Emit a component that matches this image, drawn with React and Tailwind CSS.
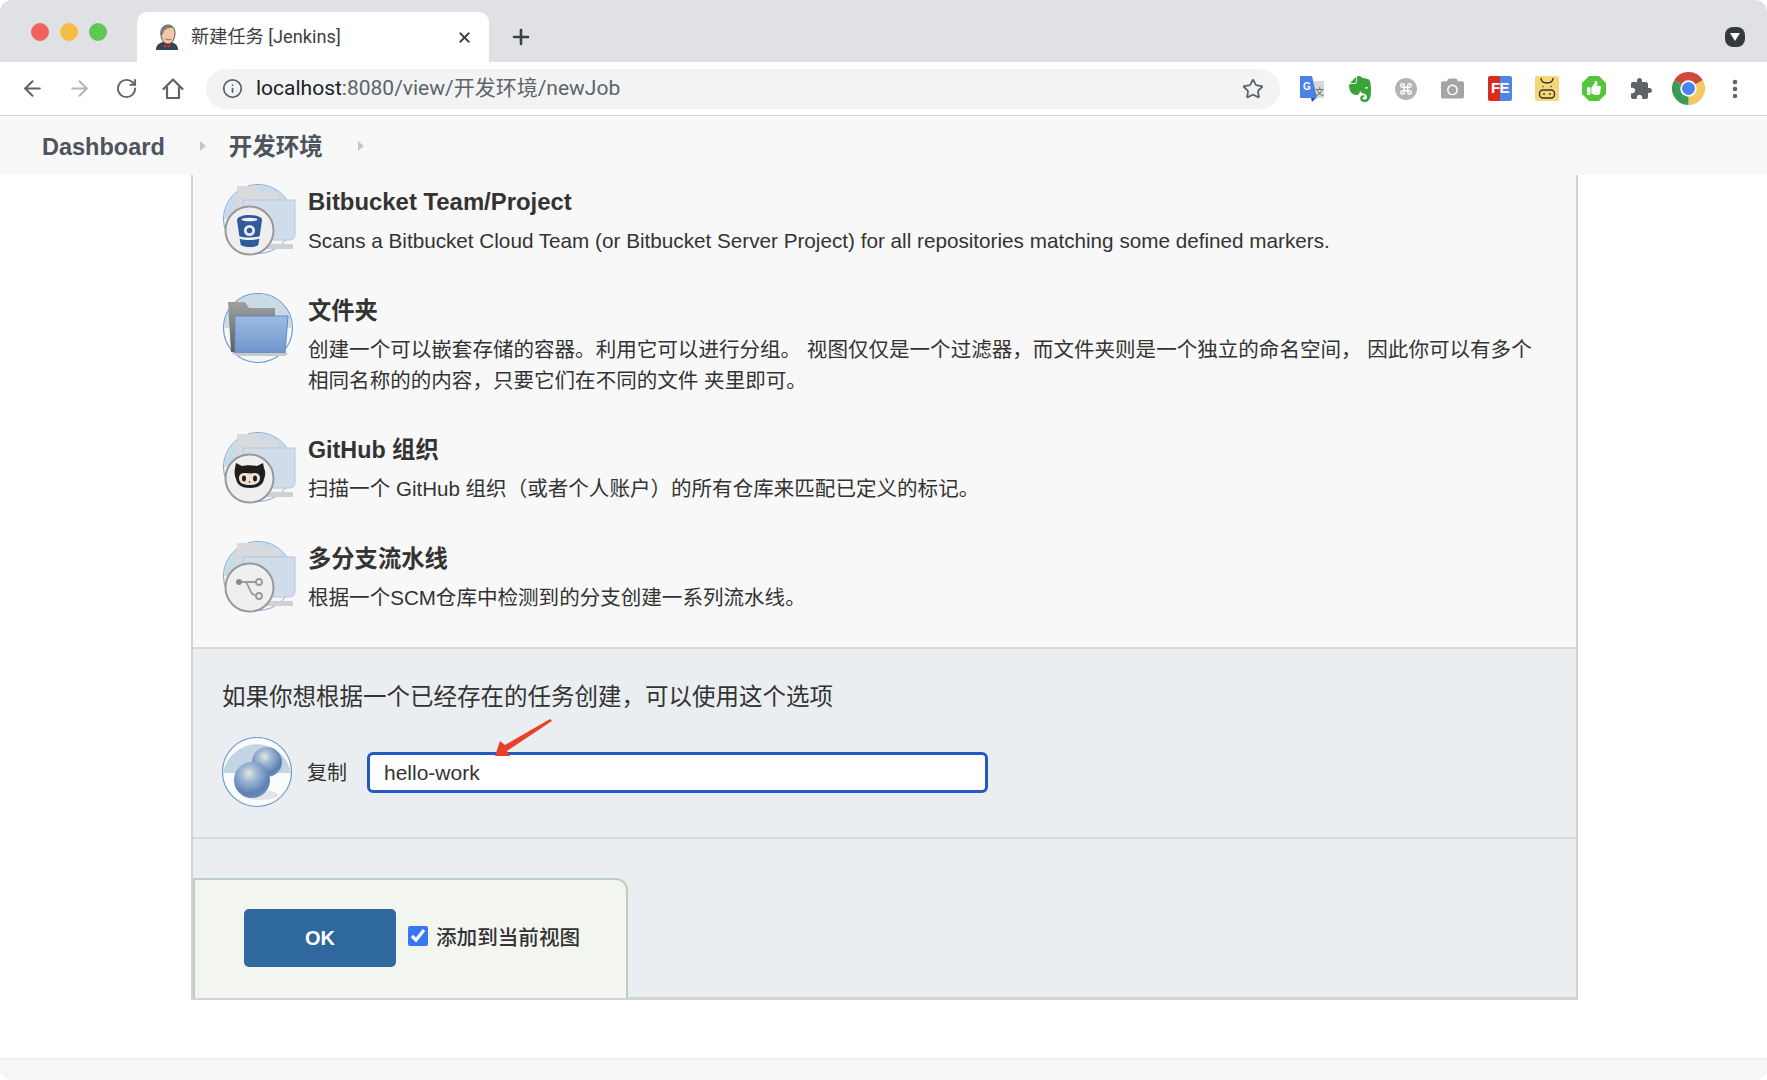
import React from 'react';
import { ArrowLeft, ArrowRight, RotateCw, Info, Star, Plus, X, Command, EllipsisVertical } from 'lucide-react';
import { FaCamera, FaThumbsUp } from 'react-icons/fa';
import { SiEvernote } from 'react-icons/si';

const font = "font-['Liberation_Sans','Noto_Sans_CJK_SC',sans-serif]";

function JenkinsFace() {
  return (
    <svg width="24" height="26" viewBox="0 0 24 26">
      <path d="M1 26c0-5 3-7 7-8h8c4 1 7 3 7 8z" fill="#2f4656" />
      <path d="M6 10c0-6 3-9 7-9s7 3 7 8c0 6-3 11-7 11s-7-4-7-10z" fill="#f0c8a8" stroke="#333" strokeWidth="0.8" />
      <path d="M6 12C4 6 7 1 13 1c3 0 5 1 6 3-4-1-8 0-10 3-1 2-1 4-3 5z" fill="#7a7a7a" />
      <path d="M10 14c2 2 5 2 7 0-1 3-6 3-7 0z" fill="#7a3320" />
      <path d="M9 20l3 2 3-2v4l-3-1.500-3 1.500z" fill="#c9302c" />
    </svg>
  );
}

function HomeOutline() {
  return (
    <svg width="22" height="24" viewBox="0 0 22 24" fill="none" stroke="#5f6368" strokeWidth="2.200" strokeLinejoin="round">
      <path d="M1.500 12L11 2.500 20.500 12" strokeLinecap="round" />
      <path d="M5 9.500V21h12V9.500" />
    </svg>
  );
}

function PuzzleIcon() {
  return (
    <svg width="24" height="24" viewBox="0 0 24 24" fill="#5f6368">
      <path d="M20.500 11H19V7c0-1.100-.9-2-2-2h-4V3.500C13 2.120 11.880 1 10.500 1S8 2.120 8 3.500V5H4c-1.100 0-1.990.9-1.990 2v3.800H3.500c1.490 0 2.700 1.210 2.700 2.700s-1.210 2.700-2.700 2.700H2V20c0 1.100.9 2 2 2h3.800v-1.500c0-1.490 1.210-2.700 2.700-2.700 1.490 0 2.700 1.210 2.700 2.700V22H17c1.100 0 2-.9 2-2v-4h1.500c1.380 0 2.500-1.120 2.500-2.500S21.880 11 20.500 11z" />
    </svg>
  );
}

function ChromeLogo() {
  return (
    <svg width="33" height="33" viewBox="0 0 32 32">
      <path d="M16 16L2.140 8A16 16 0 0 1 29.860 8Z" fill="#cf4a3c" />
      <path d="M16 16L29.860 8A16 16 0 0 1 16 32Z" fill="#f4c95d" />
      <path d="M16 16L16 32A16 16 0 0 1 2.140 8Z" fill="#3f9a59" />
      <circle cx="16" cy="16" r="8" fill="#fff" />
      <circle cx="16" cy="16" r="6.300" fill="#4c84ee" />
    </svg>
  );
}

function TranslateIcon() {
  return (
    <svg width="24" height="26" viewBox="0 0 24 26">
      <rect x="8" y="5" width="16" height="17" fill="#d8d8d8" />
      <path d="M0 0h12l5 22H0z" fill="#4a80e8" />
      <path d="M11 22h5l-4 4z" fill="#3b3fb0" />
      <text x="3" y="14" fontSize="10" fontWeight="700" fill="#fff" fontFamily="Liberation Sans">G</text>
      <text x="15" y="19" fontSize="9" fill="#666" fontFamily="Noto Sans CJK SC">文</text>
    </svg>
  );
}

function CowIcon() {
  return (
    <svg width="24" height="25" viewBox="0 0 24 25">
      <rect width="24" height="25" rx="2" fill="#f6d777" />
      <path d="M6 2c0 4 2 5 6 5s6-1 6-5" fill="none" stroke="#333" strokeWidth="1.400" />
      <rect x="4.500" y="14" width="15" height="8" rx="3.500" fill="none" stroke="#333" strokeWidth="1.400" />
      <circle cx="9" cy="18" r="0.900" fill="#333" />
      <circle cx="15" cy="18" r="0.900" fill="#333" />
      <circle cx="8" cy="10.500" r="0.700" fill="#333" />
      <circle cx="16" cy="10.500" r="0.700" fill="#333" />
    </svg>
  );
}

function ThumbIcon() {
  return (
    <div className="relative w-[24px] h-[25px]">
      <svg width="24" height="25" viewBox="0 0 24 25">
        <path d="M7 0h10l7 7v11l-7 7H7l-7-7V7z" fill="#57c53a" />
      </svg>
      <FaThumbsUp className="absolute left-[5px] top-[5px] text-white" size={14} />
    </div>
  );
}

function FeIcon() {
  return (
    <div className="flex w-[24px] h-[25px] rounded-[2px] overflow-hidden relative">
      <div className="w-1/2 bg-[#d92c20]" />
      <div className="w-1/2 bg-[#4f86e6]" />
      <span className={`absolute inset-0 flex items-center justify-center text-white text-[15px] font-bold tracking-[-0.5px] ${font}`}>FE</span>
    </div>
  );
}

// the shared round icon with a pale folder behind the badge
function JobIcon({ children }) {
  return (
    <svg width="73" height="72" viewBox="0 0 73 72" className="shrink-0">
      <circle cx="35" cy="35" r="34.500" fill="#f4f6f8" stroke="#7ba3d8" strokeWidth="1" />
      <path d="M1 35A34 34 0 0 1 69 35Z" fill="#c9dce6" />
      <path d="M14 2h20l4 6h18v48H14z" fill="#d8dadd" />
      <path d="M20 16h52v34c0 4-2 6-6 6H20z" fill="#d0dcea" stroke="#b4c7dc" strokeWidth="1" />
      <path d="M38 60h32v5H38z" fill="#cfd1d2" />
      <circle cx="26.500" cy="46.500" r="24" fill="#efefef" stroke="#999" strokeWidth="2" />
      {children}
    </svg>
  );
}

function BitbucketIcon() {
  return (
    <JobIcon>
      <path d="M14 36c0-3 6-5 12.500-5S39 33 39 36l-3.500 24c-.5 2-4 3-9 3s-8.500-1-9-3z" fill="#2f5a9c" />
      <circle cx="26.500" cy="46.500" r="5.500" fill="#efefef" />
      <circle cx="26.500" cy="46.500" r="2.800" fill="#2f5a9c" />
      <ellipse cx="26.500" cy="35.500" rx="8" ry="1.700" fill="#efefef" />
      <path d="M15.500 52c6 2 16 2 22 0l-.4 2.500c-6 2-15 2-21.200 0z" fill="#efefef" />
    </JobIcon>
  );
}

function FolderIcon() {
  return (
    <svg width="73" height="72" viewBox="0 0 73 72" className="shrink-0">
      <defs>
        <linearGradient id="folderFront" x1="0" y1="0" x2="0" y2="1">
          <stop offset="0" stopColor="#9dbbe2" />
          <stop offset="1" stopColor="#6f97cc" />
        </linearGradient>
        <linearGradient id="folderBack" x1="0" y1="0" x2="0" y2="1">
          <stop offset="0" stopColor="#a0a0a0" />
          <stop offset="1" stopColor="#5e5e5e" />
        </linearGradient>
      </defs>
      <circle cx="35" cy="35" r="34.500" fill="#f4f6f8" stroke="#6f9bd6" strokeWidth="1.200" />
      <path d="M1 35A34 34 0 0 1 69 35Z" fill="#c9dce6" />
      <path d="M5 9h17l4 6h26v44H8z" fill="url(#folderBack)" />
      <path d="M12 23h53l-3 37H12z" fill="url(#folderFront)" stroke="#5f8bc4" strokeWidth="1" />
      <path d="M8 60h58l-4 3H14z" fill="#c9c9c9" />
    </svg>
  );
}

function GithubIcon() {
  return (
    <JobIcon>
      <path d="M12 36l1-5 6 3c4-1 11-1 15 0l6-3 1 5c2 4 1 9 0 11-1 6-6 9-14 9s-13-3-14-9c-1-2-2-7-1-11z" fill="#1f1f1f" />
      <path d="M16 46c0-4 3-5 6-5 3 0 6 1 9 0 3 0 6 1 6 5 0 5-4 7-10.500 7S16 51 16 46z" fill="#f3dfd0" />
      <ellipse cx="21" cy="46.500" rx="2" ry="3" fill="#1f1f1f" />
      <ellipse cx="32" cy="46.500" rx="2" ry="3" fill="#1f1f1f" />
      <circle cx="26.500" cy="50" r="0.800" fill="#1f1f1f" />
    </JobIcon>
  );
}

function BranchIcon() {
  return (
    <JobIcon>
      <path d="M16 41h20M22 41c2 1 3 3 5 8 1 3 4 6 9 6" fill="none" stroke="#9a9a9a" strokeWidth="1.800" />
      <circle cx="16" cy="41" r="3" fill="#8a8a8a" />
      <circle cx="36" cy="41" r="3" fill="#efefef" stroke="#9a9a9a" strokeWidth="1.800" />
      <circle cx="36" cy="55" r="3" fill="#efefef" stroke="#9a9a9a" strokeWidth="1.800" />
    </JobIcon>
  );
}

function CopyIcon() {
  return (
    <svg width="71" height="71" viewBox="0 0 71 71" className="shrink-0">
      <defs>
        <radialGradient id="ball" cx="0.420" cy="0.320" r="0.700">
          <stop offset="0" stopColor="#e6e8d8" />
          <stop offset="0.300" stopColor="#a3bad6" />
          <stop offset="0.800" stopColor="#5c80b4" />
          <stop offset="1" stopColor="#6d8db9" />
        </radialGradient>
      </defs>
      <circle cx="35" cy="35" r="34.500" fill="#fbfcfd" stroke="#6f9bd6" strokeWidth="1.200" />
      <path d="M1 36A34.500 34.500 0 0 1 69 36Z" fill="#c3d5e4" />
      <ellipse cx="38" cy="58" rx="18" ry="5" fill="#e2e5e8" />
      <circle cx="45" cy="25" r="15" fill="url(#ball)" />
      <circle cx="30" cy="43" r="18" fill="url(#ball)" />
    </svg>
  );
}

function RedArrow() {
  return (
    <svg width="62" height="40" viewBox="0 0 62 40" className="absolute left-[125px] -top-[34px]">
      <polygon points="60,3 58,1 13,27 8,23 3,38 18,38 15,33" fill="#e8412b" />
    </svg>
  );
}

function JobItem({ icon, title, titleClass, descClass, children }) {
  return (
    <div className="flex gap-[12px] items-start">
      {icon}
      <div className="pt-[3px]">
        <div className={`${titleClass} leading-[30px] font-bold text-[#333]`}>{title}</div>
        <div className={`${descClass} mt-[8px] leading-[31px] text-[#333]`}>{children}</div>
      </div>
    </div>
  );
}

export default function App() {
  return (
    <div className={`h-[1080px] flex flex-col overflow-hidden rounded-[12px] bg-white ${font}`}>
      {/* Tab strip */}
      <div className="h-[62px] shrink-0 bg-[#dfe1e5] flex items-end relative">
        <div className="flex gap-[11px] self-start mt-[23px] ml-[31px]">
          <div className="w-[18px] h-[18px] rounded-full bg-[#f0625c]" />
          <div className="w-[18px] h-[18px] rounded-full bg-[#f7bb45]" />
          <div className="w-[18px] h-[18px] rounded-full bg-[#5fc754]" />
        </div>
        <div className="ml-[30px] w-[352px] h-[50px] bg-white rounded-t-[10px] flex items-center pl-[18px] pr-[16px] gap-[12px]">
          <JenkinsFace />
          <span className="text-[18.200px] text-[#3c4043] flex-1 font-['Roboto','Noto_Sans_CJK_SC',sans-serif]">新建任务 [Jenkins]</span>
          <X size={17} strokeWidth={2.5} className="text-[#3c4043]" />
        </div>
        <Plus size={24} strokeWidth={2.6} className="text-[#3c4043] self-start mt-[25px] ml-[20px]" />
        <div className="ml-auto self-start mt-[27px] mr-[22px] w-[20px] h-[20px] rounded-[8px] bg-[#35383c] flex items-center justify-center">
          <div className="w-0 h-0 border-x-[5.5px] border-x-transparent border-t-[8px] border-t-white" />
        </div>
      </div>

      {/* Toolbar */}
      <div className="h-[54px] shrink-0 bg-white border-b border-[#d6d8da] flex items-center">
        <ArrowLeft size={25} strokeWidth={1.9} className="ml-[20px] text-[#5f6368]" />
        <ArrowRight size={25} strokeWidth={1.9} className="ml-[22px] text-[#b4b6b9]" />
        <RotateCw size={23} strokeWidth={2} className="ml-[23px] text-[#5f6368]" />
        <div className="ml-[24px]"><HomeOutline /></div>
        <div className="ml-[22px] w-[1074px] h-[40px] rounded-full bg-[#f1f3f4] flex items-center pl-[16px] pr-[16px]">
          <Info size={21} strokeWidth={2} className="text-[#5f6368]" />
          <span className="ml-[13px] text-[21px] text-[#5f6368] flex-1 font-['Roboto','Noto_Sans_CJK_SC',sans-serif]">
            <span className="text-[#202124]">localhost</span>:8080/view/开发环境/newJob
          </span>
          <Star size={22} strokeWidth={2} className="text-[#5f6368]" />
        </div>
        <div className="ml-[20px] flex items-center">
          <div className="w-[24px] flex justify-center"><TranslateIcon /></div>
          <SiEvernote size={26} className="ml-[23px] text-[#3ba33a]" />
          <div className="ml-[22px] w-[22px] h-[22px] rounded-full bg-[#b4b4b4] flex items-center justify-center">
            <Command size={14} strokeWidth={2.4} className="text-white" />
          </div>
          <FaCamera size={23} className="ml-[24px] text-[#a4a4a4]" />
          <div className="ml-[24px]"><FeIcon /></div>
          <div className="ml-[23px]"><CowIcon /></div>
          <div className="ml-[23px]"><ThumbIcon /></div>
          <div className="ml-[23px]"><PuzzleIcon /></div>
          <div className="ml-[19px]"><ChromeLogo /></div>
          <EllipsisVertical size={24} strokeWidth={2.6} className="ml-[18px] text-[#5f6368]" />
        </div>
      </div>

      {/* Breadcrumb */}
      <div className="h-[59px] shrink-0 bg-[#f8f8f8] flex items-center pl-[42px] text-[#4d545d] pt-[1px]">
        <span className="text-[23.500px] font-bold pt-[3px]">Dashboard</span>
        <div className="ml-[35px] w-0 h-0 border-y-[5.5px] border-y-transparent border-l-[6px] border-l-[#c4c6c8]" />
        <span className="ml-[23px] text-[23.500px] font-bold pt-[3px]">开发环境</span>
        <div className="ml-[35px] w-0 h-0 border-y-[5.5px] border-y-transparent border-l-[6px] border-l-[#c4c6c8]" />
      </div>

      {/* Page */}
      <div className="flex-1 pl-[191px]">
        <div className="w-[1387px] border-x-2 border-b-[3px] border-[#d2d3d3]">
          <div className="bg-[#f8f8f8] pt-[9px] pb-[34.500px] pl-[30px] flex flex-col gap-[36.500px]">
            <JobItem icon={<BitbucketIcon />} title="Bitbucket Team/Project" titleClass="text-[23.900px]" descClass="text-[20.700px]">
              Scans a Bitbucket Cloud Team (or Bitbucket Server Project) for all repositories matching some defined markers.
            </JobItem>
            <JobItem icon={<FolderIcon />} title="文件夹" titleClass="text-[23.300px]" descClass="text-[20.550px]">
              创建一个可以嵌套存储的容器。利用它可以进行分组。 视图仅仅是一个过滤器，而文件夹则是一个独立的命名空间， 因此你可以有多个
              <br />
              相同名称的的内容，只要它们在不同的文件 夹里即可。
            </JobItem>
            <JobItem icon={<GithubIcon />} title="GitHub 组织" titleClass="text-[23.300px]" descClass="text-[20.550px]">
              扫描一个 GitHub 组织（或者个人账户）的所有仓库来匹配已定义的标记。
            </JobItem>
            <JobItem icon={<BranchIcon />} title="多分支流水线" titleClass="text-[23.300px]" descClass="text-[20.550px]">
              根据一个SCM仓库中检测到的分支创建一系列流水线。
            </JobItem>
          </div>

          <div className="bg-[#eaeef1] border-t-2 border-[#d6d9db] pt-[32px] h-[190px] pl-[29px]">
            <div className="text-[23.500px] leading-[32px] text-[#333]">如果你想根据一个已经存在的任务创建，可以使用这个选项</div>
            <div className="mt-[24px] flex items-center">
              <CopyIcon />
              <span className="ml-[14px] text-[20px] text-[#333]">复制</span>
              <div className="ml-[20px] relative">
                <input
                  defaultValue="hello-work"
                  className="w-[621px] h-[41px] bg-white border-[3px] border-[#2459c4] rounded-[6px] pl-[14px] text-[21px] text-[#333] outline-none"
                />
                <RedArrow />
              </div>
            </div>
          </div>

          <div className="bg-[#eaeef1] border-t-2 border-[#d6d9db] h-[160px] pt-[39px]">
            <div className="w-[435px] h-[120px] bg-[#f3f5f1] border-t-2 border-l-2 border-r-2 border-[#b9cfc0] rounded-tr-[12px] flex items-center pl-[49px] pb-[2px]">
              <button className="w-[152px] h-[58px] rounded-[5px] bg-[#2f689c] text-white text-[20px] font-bold">OK</button>
              <input type="checkbox" defaultChecked className="ml-[12px] mb-[4px] w-[20px] h-[20px] accent-[#3478f6]" />
              <span className="ml-[8px] text-[20.600px] font-medium text-[#333]">添加到当前视图</span>
            </div>
          </div>
        </div>
      </div>

      {/* Status strip */}
      <div className="h-[22px] shrink-0 bg-[#f5f6f7] border-t-2 border-[#eef0f3]" />
    </div>
  );
}
